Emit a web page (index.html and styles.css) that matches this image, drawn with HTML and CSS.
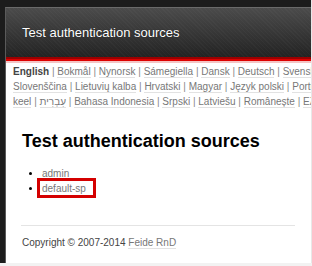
FILE: index.html
```html
<!DOCTYPE html>
<html lang="en">
<head>
    <meta charset="UTF-8">
    <meta name="viewport" content="width=device-width, initial-scale=1.0">
    <title>Test authentication sources</title>
    <link rel="stylesheet" href="styles.css">
</head>
<body>
    <div class="frame">
        <div class="page">
            <div class="header">
                <h1 class="site-title">Test authentication sources</h1>
            </div>
            <div class="header-rule"></div>

            <!-- Language bar -->
            <div class="languages">
                <div class="lang-line"><strong>English</strong> | <a href="#">Bokmål</a> | <a href="#">Nynorsk</a> | <a href="#">Sámegiella</a> | <a href="#">Dansk</a> | <a href="#">Deutsch</a> | <a href="#">Svenska</a> | <a href="#">Suomeksi</a> | <a href="#">Español</a></div>
                <div class="lang-line"><a href="#">Slovenščina</a> | <a href="#">Lietuvių kalba</a> | <a href="#">Hrvatski</a> | <a href="#">Magyar</a> | <a href="#">Język polski</a> | <a href="#">Português</a> | <a href="#">Türkçe</a></div>
                <div class="lang-line"><a href="#">keel</a> | <a href="#">עִבְרִית</a> | <a href="#">Bahasa Indonesia</a> | <a href="#">Srpski</a> | <a href="#">Latviešu</a> | <a href="#">Românește</a> | <a href="#">Ελληνικά</a></div>
            </div>

            <div class="content">
                <h2>Test authentication sources</h2>
                <ul class="sources">
                    <li><a href="#">admin</a></li>
                    <li><a href="#" class="highlight">default-sp</a></li>
                </ul>
            </div>

            <div class="footer">
                <hr>
                Copyright © 2007-2014 <a href="#">Feide RnD</a>
            </div>
        </div>
    </div>
</body>
</html>
```

FILE: styles.css
```css
body {
    margin: 0;
    background-color: #f2f2f2;
    font-family: "Liberation Sans", Arial, sans-serif;
    overflow: hidden;
}
.frame {
    background-color: #1c1c1c;
    padding: 7px 0 0 5px;
    height: 256px;
    border-right: 1px solid #e8e8e8;
}
.page {
    background-color: #fff;
    border-left: 1px solid #5a5a5a;
    border-top: 1px solid #6a6a6a;
    height: 255px;
    overflow: hidden;
}
.header {
    height: 49px;
    padding-left: 16px;
    background:
        repeating-linear-gradient(45deg, rgba(255, 255, 255, 0.025) 0 1px, transparent 1px 3px),
        linear-gradient(#4b4b4b, #232323);
    display: flex;
    align-items: center;
}
.site-title {
    margin: 0 0 1px;
    color: #fff;
    font-size: 13px;
    font-weight: normal;
    text-shadow: 0 0 1px rgba(0, 0, 0, 0.6);
}
.header-rule {
    height: 6px;
    background: linear-gradient(#9a0000 0 2px, #dd0000 2px 4px, #f4c4c4 4px 6px);
}
.languages {
    padding: 1px 0 0 7px;
    font-size: 10px;
    line-height: 15px;
    color: #888;
}
.lang-line {
    white-space: nowrap;
}
.languages strong {
    color: #444;
}
a {
    color: #777;
    text-decoration: none;
    border-bottom: 1px solid #e2e2e2;
}
.content {
    padding: 22px 16px 0;
}
h2 {
    margin: 0;
    font-size: 18px;
    line-height: 20px;
    color: #000;
}
.sources {
    margin: 15px 0 0;
    padding-left: 20px;
    font-size: 10px;
    line-height: 15px;
}
.sources a {
    border-bottom: none;
}
.highlight {
    position: relative;
}
.highlight::after {
    content: "";
    position: absolute;
    left: -5px;
    top: -5px;
    width: 59px;
    height: 20px;
    box-sizing: border-box;
    border: 3px solid #d40000;
}
.footer {
    padding: 0 16px;
    font-size: 10px;
    line-height: 15px;
    color: #444;
}
.footer hr {
    margin: 29px 0 9px -1px;
    border: none;
    border-top: 1px solid #e4e4e4;
}
```
